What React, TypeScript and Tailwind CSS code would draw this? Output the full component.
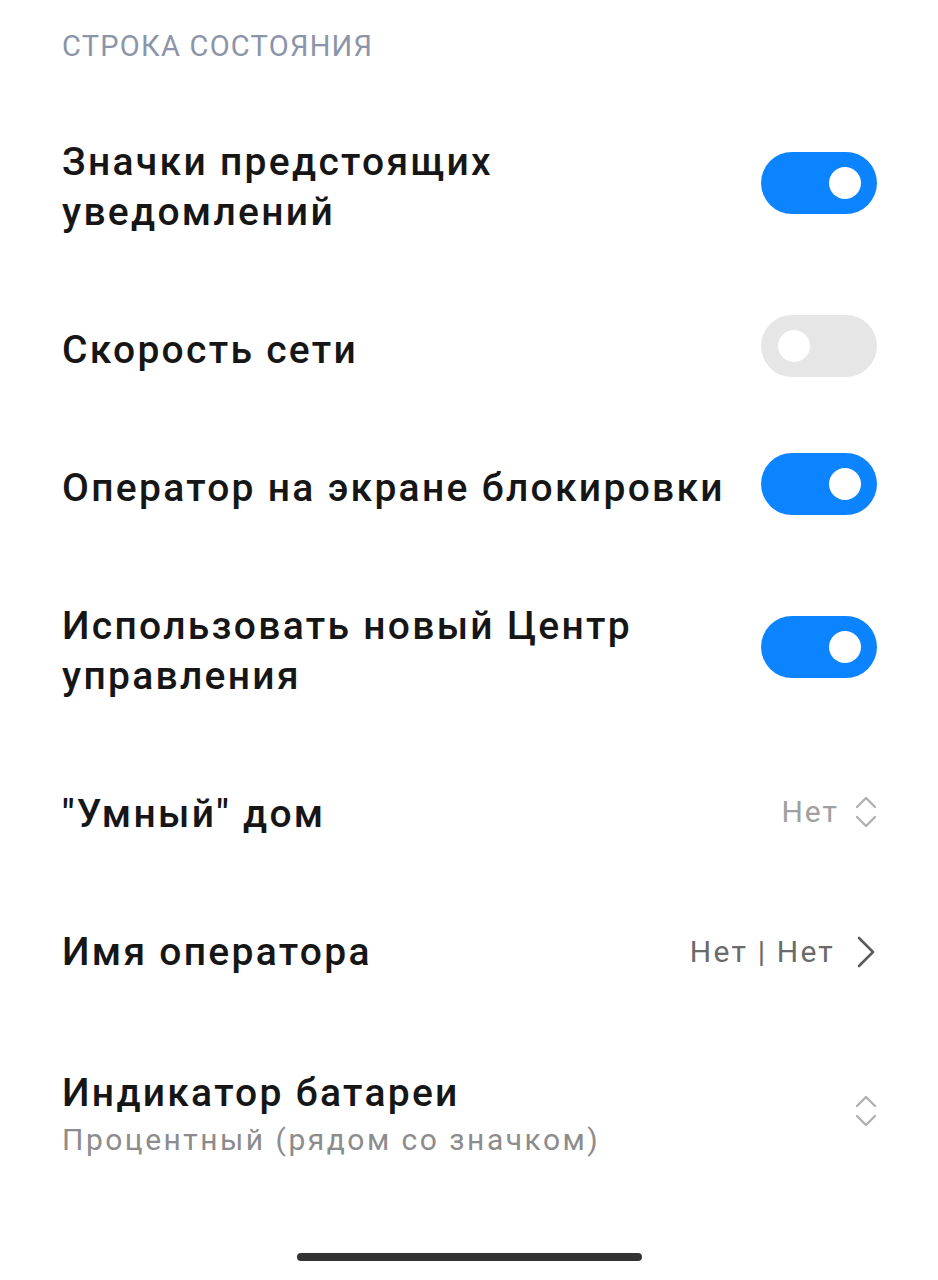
import React from "react";

const font = { fontFamily: "Roboto, 'Noto Sans', sans-serif" };

function Toggle({ on }: { on: boolean }) {
  return (
    <div
      className={
        "relative mb-2 h-[62px] w-[116px] shrink-0 rounded-full " +
        (on ? "bg-[#0d84ff]" : "bg-[#e6e6e6]")
      }
    >
      <div
        className={
          "absolute top-[15px] h-[32px] w-[32px] rounded-full bg-white " +
          (on ? "right-[16px]" : "left-[17px]")
        }
      />
    </div>
  );
}

function UpDown() {
  return (
    <svg width="22" height="34" viewBox="0 0 22 34" className="shrink-0">
      <polyline points="2,12 11,3 20,12" fill="none" stroke="#b0b0b0" strokeWidth="2.4" strokeLinecap="round" strokeLinejoin="round" />
      <polyline points="2,22 11,31 20,22" fill="none" stroke="#b0b0b0" strokeWidth="2.4" strokeLinecap="round" strokeLinejoin="round" />
    </svg>
  );
}

function ChevronRight() {
  return (
    <svg width="22" height="32" viewBox="0 0 22 32" className="shrink-0">
      <polyline points="4,2 18,16 4,30" fill="none" stroke="#5a5a5a" strokeWidth="2.6" strokeLinecap="round" strokeLinejoin="round" />
    </svg>
  );
}

function Title({ children }: { children: React.ReactNode }) {
  return (
    <div className="text-[39px] font-medium leading-[50px] tracking-[2.3px] text-[#161616]">{children}</div>
  );
}

export default function App() {
  return (
    <div className="min-h-[1280px] w-full bg-white" style={font}>
      <div className="h-[93px] px-[62px] pt-[26px] text-[29px] leading-[40px] tracking-[1.25px] text-[#8b94a8]">
        СТРОКА СОСТОЯНИЯ
      </div>

      <div className="flex h-[188px] items-center justify-between gap-6 pl-[62px] pr-[61px]">
        <Title>
          Значки предстоящих
          <br />
          уведомлений
        </Title>
        <Toggle on />
      </div>

      <div className="flex h-[138px] items-center justify-between gap-6 pl-[62px] pr-[61px]">
        <Title>Скорость сети</Title>
        <Toggle on={false} />
      </div>

      <div className="flex h-[138px] items-center justify-between gap-6 pl-[62px] pr-[61px]">
        <Title>Оператор на экране блокировки</Title>
        <Toggle on />
      </div>

      <div className="flex h-[188px] items-center justify-between gap-6 pl-[62px] pr-[61px]">
        <Title>
          Использовать новый Центр
          <br />
          управления
        </Title>
        <Toggle on />
      </div>

      <div className="flex h-[138px] items-center justify-between gap-6 pl-[62px] pr-[61px]">
        <Title>"Умный" дом</Title>
        <div className="mb-1 flex items-center gap-[16px]">
          <span className="text-[30px] leading-[40px] tracking-[2px] text-[#a0a0a0]">Нет</span>
          <UpDown />
        </div>
      </div>

      <div className="flex h-[138px] items-center justify-between gap-6 pl-[62px] pr-[61px]">
        <Title>Имя оператора</Title>
        <div className="flex items-center gap-[20px]">
          <span className="text-[30px] leading-[40px] tracking-[2.2px] text-[#6a6a6a]">Нет | Нет</span>
          <ChevronRight />
        </div>
      </div>

      <div className="flex h-[188px] items-center justify-between gap-6 pl-[62px] pr-[61px]">
        <div>
          <Title>Индикатор батареи</Title>
          <div className="text-[30px] leading-[44px] tracking-[2.5px] text-[#8c8c8c]">Процентный (рядом со значком)</div>
        </div>
        <div className="mb-2">
          <UpDown />
        </div>
      </div>

      <div className="mt-[44px] flex justify-center">
        <div className="h-[8px] w-[345px] rounded-full bg-[#333333]" />
      </div>
    </div>
  );
}
